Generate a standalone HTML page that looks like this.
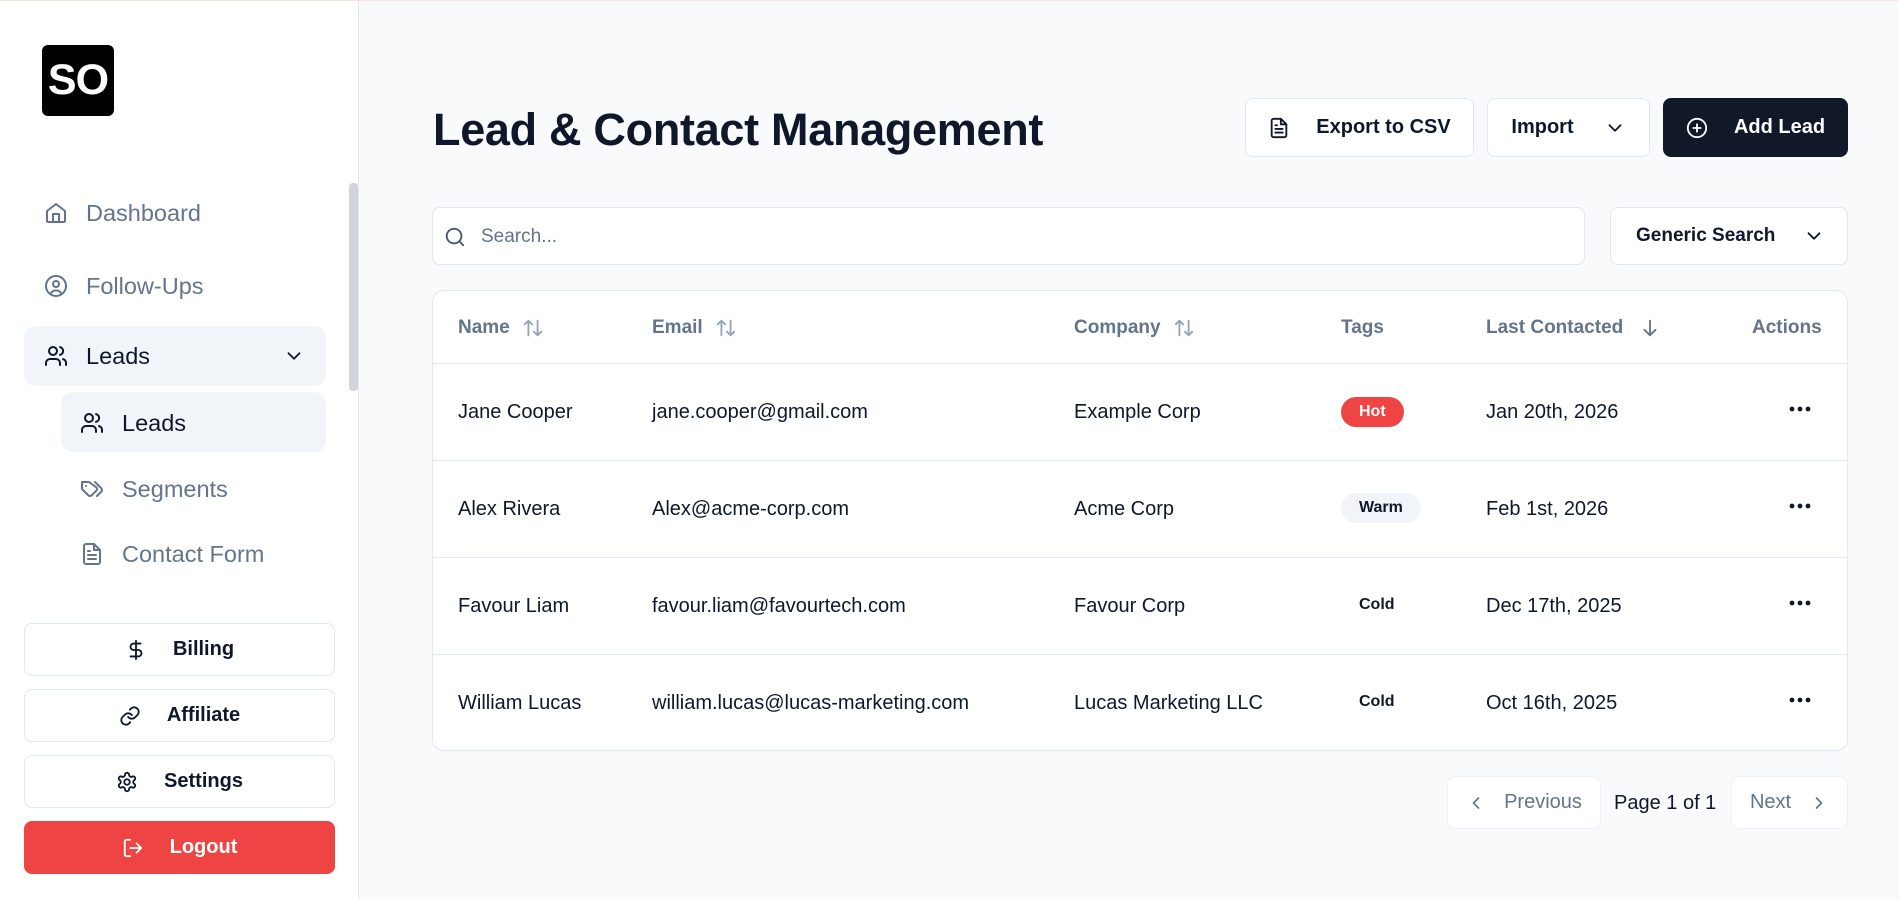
<!DOCTYPE html>
<html><head><meta charset="utf-8"><style>
*{box-sizing:border-box;margin:0;padding:0}
body{width:1899px;height:898px;overflow:hidden;background:#f8fafc;font-family:"Liberation Sans",sans-serif;color:#0f172a;position:relative;border-top:1px solid #fde2e2}
.a{position:absolute}
.side{left:0;top:0;width:359px;height:898px;background:#fff;border-right:1px solid #e5e7eb}
.logo{left:42px;top:44px;width:72px;height:71px;background:#000;border-radius:6px;color:#fff;font-weight:bold;font-size:43px;line-height:71px;text-align:center;letter-spacing:-1px}
.nav{display:flex;align-items:center;font-size:23.5px;color:#64748b;height:60px;margin-top:-30px}
.nav svg{width:24px;height:24px;margin-right:18px;fill:none;stroke:currentColor;stroke-width:2;stroke-linecap:round;stroke-linejoin:round}
.bb{left:24px;width:311px;height:53px;border:1px solid #e2e8f0;border-radius:8px;background:#fff;display:flex;align-items:center;justify-content:center;font-size:20px;font-weight:bold;color:#0f172a}
.bb svg{width:22px;height:22px;margin-right:26px;fill:none;stroke:currentColor;stroke-width:2;stroke-linecap:round;stroke-linejoin:round}
.btn{top:97px;height:59px;border:1px solid #e2e8f0;border-radius:8px;background:#fff;display:flex;align-items:center;justify-content:center;font-size:20px;font-weight:bold}
.btn svg{width:22px;height:22px;fill:none;stroke:currentColor;stroke-width:2;stroke-linecap:round;stroke-linejoin:round}
.th{top:316px;font-size:19px;font-weight:bold;color:#64748b;display:flex;align-items:center}
.th svg{width:22px;height:22px;margin-left:12px;fill:none;stroke:#94a3b8;stroke-width:2;stroke-linecap:round;stroke-linejoin:round}
.td{font-size:20px;color:#0f172a}
.line{left:433px;width:1415px;height:1px;background:#e2e8f0}
.badge{font-size:16px;font-weight:bold;border-radius:16px;padding:0 18px;height:30px;line-height:30px}
</style></head><body>
<div class="a side"></div>
<div class="a logo">SO</div>
<div class="a" style="left:349px;top:182px;width:9px;height:208px;background:#d1d5db;border-radius:4px"></div>

<div class="a nav" style="left:44px;top:212px"><svg viewBox="0 0 24 24"><path d="M3 10l9-7 9 7v10a1 1 0 0 1-1 1H4a1 1 0 0 1-1-1z"/><path d="M9 21v-8h6v8"/></svg>Dashboard</div>
<div class="a nav" style="left:44px;top:285px"><svg viewBox="0 0 24 24"><circle cx="12" cy="12" r="10"/><circle cx="12" cy="10" r="3"/><path d="M7 19a6 6 0 0 1 10 0"/></svg>Follow-Ups</div>
<div class="a" style="left:24px;top:325px;width:302px;height:60px;background:#f1f5f9;border-radius:12px"></div>
<div class="a nav" style="left:44px;top:355px;color:#0f172a"><svg viewBox="0 0 24 24"><circle cx="9" cy="7" r="4"/><path d="M2 21v-2a4 4 0 0 1 4-4h6a4 4 0 0 1 4 4v2"/><path d="M16 3.1a4 4 0 0 1 0 7.8M22 21v-2a4 4 0 0 0-3-3.9"/></svg>Leads</div>
<svg class="a" style="left:283px;top:344px" width="22" height="22" viewBox="0 0 24 24" fill="none" stroke="#0f172a" stroke-width="2" stroke-linecap="round"><path d="M6 9l6 6 6-6"/></svg>
<div class="a" style="left:61px;top:391px;width:265px;height:60px;background:#f1f5f9;border-radius:12px"></div>
<div class="a nav" style="left:80px;top:422px;color:#0f172a"><svg viewBox="0 0 24 24"><circle cx="9" cy="7" r="4"/><path d="M2 21v-2a4 4 0 0 1 4-4h6a4 4 0 0 1 4 4v2"/><path d="M16 3.1a4 4 0 0 1 0 7.8M22 21v-2a4 4 0 0 0-3-3.9"/></svg>Leads</div>
<div class="a nav" style="left:80px;top:488px"><svg viewBox="0 0 24 24"><path d="M9 5H2v7l6.3 6.3a2.4 2.4 0 0 0 3.4 0l4.6-4.6a2.4 2.4 0 0 0 0-3.4z"/><path d="M6 9h.01M15 5l6.3 6.3a2.4 2.4 0 0 1 0 3.4L17 19"/></svg>Segments</div>
<div class="a nav" style="left:80px;top:553px"><svg viewBox="0 0 24 24"><path d="M14 2H6a2 2 0 0 0-2 2v16a2 2 0 0 0 2 2h12a2 2 0 0 0 2-2V8z"/><path d="M14 2v6h6M16 13H8M16 17H8M10 9H8"/></svg>Contact Form</div>

<div class="a bb" style="top:622px"><svg viewBox="0 0 24 24"><path d="M12 2v20M17 5H9.5a3.5 3.5 0 0 0 0 7h5a3.5 3.5 0 0 1 0 7H6"/></svg>Billing</div>
<div class="a bb" style="top:688px"><svg viewBox="0 0 24 24"><path d="M10 13a5 5 0 0 0 7.5.5l3-3a5 5 0 0 0-7-7l-1.7 1.7"/><path d="M14 11a5 5 0 0 0-7.5-.5l-3 3a5 5 0 0 0 7 7l1.7-1.7"/></svg>Affiliate</div>
<div class="a bb" style="top:754px"><svg viewBox="0 0 24 24"><path d="M12.2 2h-.4a2 2 0 0 0-2 2v.2a2 2 0 0 1-1 1.7l-.4.3a2 2 0 0 1-2 0l-.2-.1a2 2 0 0 0-2.7.7l-.2.4a2 2 0 0 0 .7 2.7l.2.1a2 2 0 0 1 1 1.7v.5a2 2 0 0 1-1 1.8l-.2.1a2 2 0 0 0-.7 2.7l.2.4a2 2 0 0 0 2.7.7l.2-.1a2 2 0 0 1 2 0l.4.3a2 2 0 0 1 1 1.7v.2a2 2 0 0 0 2 2h.4a2 2 0 0 0 2-2v-.2a2 2 0 0 1 1-1.7l.4-.3a2 2 0 0 1 2 0l.2.1a2 2 0 0 0 2.7-.7l.2-.4a2 2 0 0 0-.7-2.7l-.2-.1a2 2 0 0 1-1-1.8v-.5a2 2 0 0 1 1-1.7l.2-.1a2 2 0 0 0 .7-2.7l-.2-.4a2 2 0 0 0-2.7-.7l-.2.1a2 2 0 0 1-2 0l-.4-.3a2 2 0 0 1-1-1.7V4a2 2 0 0 0-2-2z"/><circle cx="12" cy="12" r="3"/></svg>Settings</div>
<div class="a bb" style="top:820px;background:#ef4444;border-color:#ef4444;color:#fff"><svg viewBox="0 0 24 24"><path d="M9 21H5a2 2 0 0 1-2-2V5a2 2 0 0 1 2-2h4M16 17l5-5-5-5M21 12H9"/></svg>Logout</div>

<div class="a" style="left:433px;top:103px;font-size:45px;font-weight:bold;color:#0f172a;letter-spacing:-.3px">Lead &amp; Contact Management</div>
<div class="a btn" style="left:1245px;width:229px"><svg viewBox="0 0 24 24" style="margin-right:26px"><path d="M14 2H6a2 2 0 0 0-2 2v16a2 2 0 0 0 2 2h12a2 2 0 0 0 2-2V8z"/><path d="M14 2v6h6M16 13H8M16 17H8M10 9H8"/></svg>Export to CSV</div>
<div class="a btn" style="left:1487px;width:163px">Import<svg viewBox="0 0 24 24" style="margin-left:30px"><path d="M6 9l6 6 6-6"/></svg></div>
<div class="a btn" style="left:1663px;width:185px;background:#111827;border-color:#111827;color:#fff"><svg viewBox="0 0 24 24" style="margin-right:26px"><circle cx="12" cy="12" r="10"/><path d="M12 8v8M8 12h8"/></svg>Add Lead</div>

<div class="a" style="left:432px;top:206px;width:1153px;height:58px;background:#fff;border:1px solid #e2e8f0;border-radius:8px"></div>
<svg class="a" style="left:444px;top:225px" width="22" height="22" viewBox="0 0 24 24" fill="none" stroke="#475569" stroke-width="2" stroke-linecap="round"><circle cx="11" cy="11" r="8"/><path d="M21 21l-4.3-4.3"/></svg>
<div class="a" style="left:481px;top:225px;font-size:19px;color:#64748b">Search...</div>
<div class="a btn" style="left:1610px;top:206px;width:238px;height:58px;justify-content:flex-start;padding-left:25px;font-size:19px">Generic Search<svg viewBox="0 0 24 24" style="margin-left:28px"><path d="M6 9l6 6 6-6"/></svg></div>

<div class="a" style="left:432px;top:289px;width:1416px;height:461px;background:#fff;border:1px solid #e2e8f0;border-radius:12px"></div>
<div class="a th" style="left:458px">Name<svg viewBox="0 0 24 24"><path d="M7 20V4M3 8l4-4 4 4M17 4v16M13 16l4 4 4-4"/></svg></div>
<div class="a th" style="left:652px">Email<svg viewBox="0 0 24 24"><path d="M7 20V4M3 8l4-4 4 4M17 4v16M13 16l4 4 4-4"/></svg></div>
<div class="a th" style="left:1074px">Company<svg viewBox="0 0 24 24"><path d="M7 20V4M3 8l4-4 4 4M17 4v16M13 16l4 4 4-4"/></svg></div>
<div class="a th" style="left:1341px">Tags</div>
<div class="a th" style="left:1486px">Last Contacted<svg viewBox="0 0 24 24" style="stroke:#64748b;margin-left:16px"><path d="M12 4v16M6 14l6 6 6-6"/></svg></div>
<div class="a th" style="left:1752px">Actions</div>
<div class="a line" style="top:362px"></div>
<div class="a line" style="top:459px"></div>
<div class="a line" style="top:556px"></div>
<div class="a line" style="top:653px"></div>

<div class="a td" style="left:458px;top:400px">Jane Cooper</div>
<div class="a td" style="left:652px;top:400px">jane.cooper@gmail.com</div>
<div class="a td" style="left:1074px;top:400px">Example Corp</div>
<div class="a badge" style="left:1341px;top:396px;background:#ef4444;color:#fff">Hot</div>
<div class="a td" style="left:1486px;top:400px">Jan 20th, 2026</div>

<div class="a td" style="left:458px;top:497px">Alex Rivera</div>
<div class="a td" style="left:652px;top:497px">Alex@acme-corp.com</div>
<div class="a td" style="left:1074px;top:497px">Acme Corp</div>
<div class="a badge" style="left:1341px;top:492px;background:#f1f5f9">Warm</div>
<div class="a td" style="left:1486px;top:497px">Feb 1st, 2026</div>

<div class="a td" style="left:458px;top:594px">Favour Liam</div>
<div class="a td" style="left:652px;top:594px">favour.liam@favourtech.com</div>
<div class="a td" style="left:1074px;top:594px">Favour Corp</div>
<div class="a badge" style="left:1341px;top:589px">Cold</div>
<div class="a td" style="left:1486px;top:594px">Dec 17th, 2025</div>

<div class="a td" style="left:458px;top:691px">William Lucas</div>
<div class="a td" style="left:652px;top:691px">william.lucas@lucas-marketing.com</div>
<div class="a td" style="left:1074px;top:691px">Lucas Marketing LLC</div>
<div class="a badge" style="left:1341px;top:686px">Cold</div>
<div class="a td" style="left:1486px;top:691px">Oct 16th, 2025</div>

<svg class="a" style="left:1788px;top:404px" width="24" height="8"><circle cx="4" cy="4" r="2.4" fill="#0f172a"/><circle cx="12" cy="4" r="2.4" fill="#0f172a"/><circle cx="20" cy="4" r="2.4" fill="#0f172a"/></svg>
<svg class="a" style="left:1788px;top:501px" width="24" height="8"><circle cx="4" cy="4" r="2.4" fill="#0f172a"/><circle cx="12" cy="4" r="2.4" fill="#0f172a"/><circle cx="20" cy="4" r="2.4" fill="#0f172a"/></svg>
<svg class="a" style="left:1788px;top:598px" width="24" height="8"><circle cx="4" cy="4" r="2.4" fill="#0f172a"/><circle cx="12" cy="4" r="2.4" fill="#0f172a"/><circle cx="20" cy="4" r="2.4" fill="#0f172a"/></svg>
<svg class="a" style="left:1788px;top:695px" width="24" height="8"><circle cx="4" cy="4" r="2.4" fill="#0f172a"/><circle cx="12" cy="4" r="2.4" fill="#0f172a"/><circle cx="20" cy="4" r="2.4" fill="#0f172a"/></svg>

<div class="a btn" style="left:1447px;top:775px;width:154px;height:53px;color:#64748b;font-weight:normal;border-color:#eef2f6"><svg viewBox="0 0 24 24" style="width:20px;margin-right:18px"><path d="M15 18l-6-6 6-6"/></svg>Previous</div>
<div class="a td" style="left:1614px;top:791px">Page 1 of 1</div>
<div class="a btn" style="left:1731px;top:775px;width:117px;height:53px;color:#64748b;font-weight:normal;border-color:#eef2f6">Next<svg viewBox="0 0 24 24" style="width:20px;margin-left:18px"><path d="M9 18l6-6-6-6"/></svg></div>
</body></html>
